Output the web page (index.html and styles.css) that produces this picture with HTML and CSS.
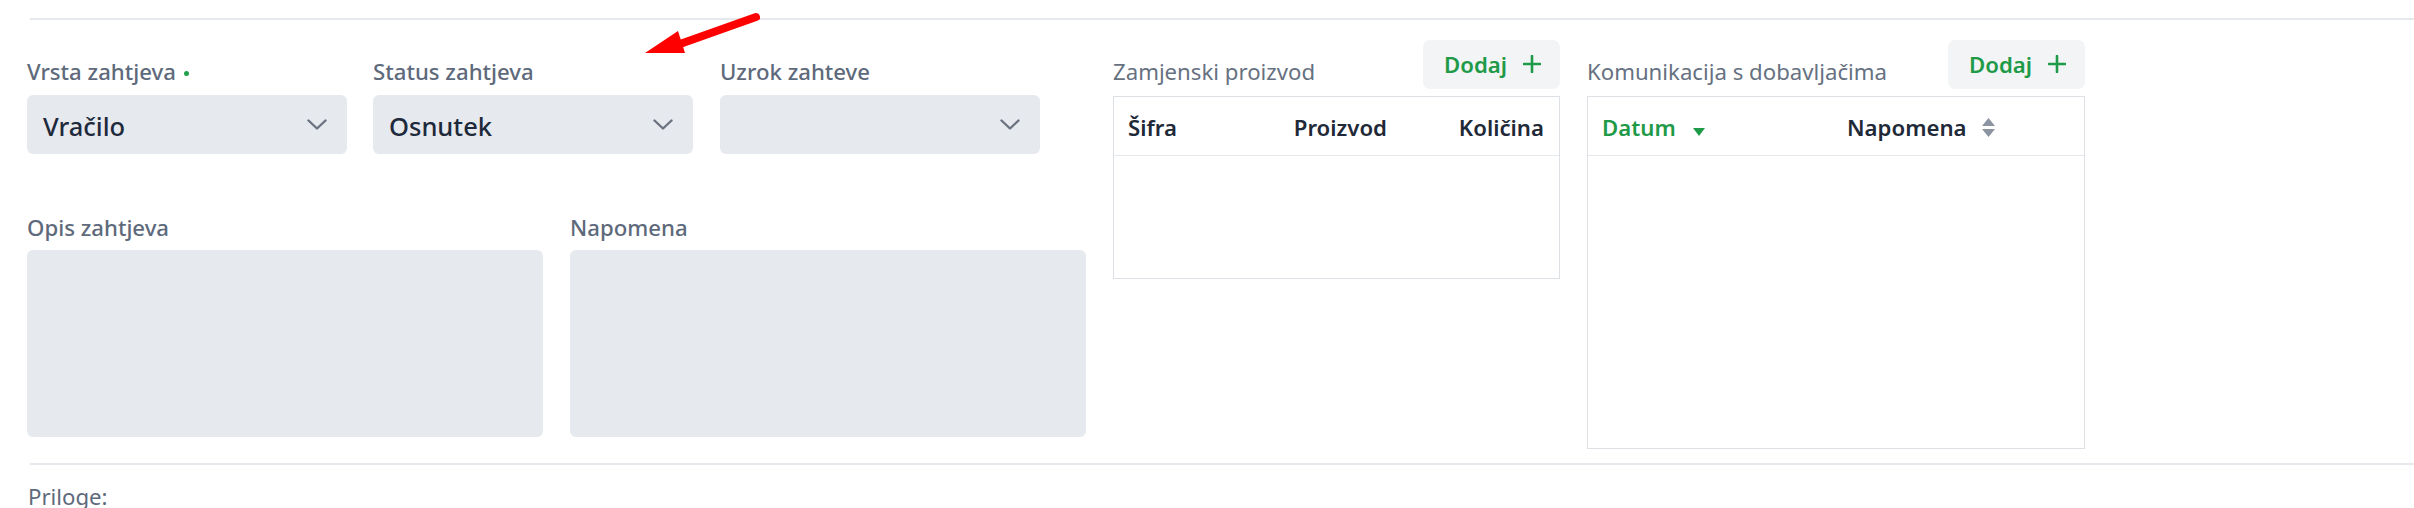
FILE: index.html
```html
<!DOCTYPE html>
<html lang="hr">
<head>
<meta charset="utf-8">
<title>Zahtjev</title>
<link rel="stylesheet" href="styles.css">
</head>
<body>
<div class="page">
  <div class="rule rule-top"></div>
  <div class="main">
    <div class="form">
      <div class="row row-3">
        <div class="field">
          <div class="label">Vrsta zahtjeva <span class="req"></span></div>
          <div class="select"><span class="value">Vračilo</span><svg class="chev" viewBox="0 0 20 11" width="20" height="11"><path d="M1.5 1.5 L10 9.5 L18.5 1.5" fill="none" stroke="#6b7280" stroke-width="2.4" stroke-linecap="round" stroke-linejoin="round"/></svg></div>
        </div>
        <div class="field">
          <div class="label">Status zahtjeva</div>
          <div class="select"><span class="value">Osnutek</span><svg class="chev" viewBox="0 0 20 11" width="20" height="11"><path d="M1.5 1.5 L10 9.5 L18.5 1.5" fill="none" stroke="#6b7280" stroke-width="2.4" stroke-linecap="round" stroke-linejoin="round"/></svg></div>
        </div>
        <div class="field">
          <div class="label">Uzrok zahteve</div>
          <div class="select"><span class="value"></span><svg class="chev" viewBox="0 0 20 11" width="20" height="11"><path d="M1.5 1.5 L10 9.5 L18.5 1.5" fill="none" stroke="#6b7280" stroke-width="2.4" stroke-linecap="round" stroke-linejoin="round"/></svg></div>
        </div>
      </div>
      <div class="row row-2">
        <div class="field field-wide">
          <div class="label">Opis zahtjeva</div>
          <div class="textarea"></div>
        </div>
        <div class="field field-wide">
          <div class="label">Napomena</div>
          <div class="textarea"></div>
        </div>
      </div>
    </div>

    <div class="panel panel-1">
      <div class="panel-head">
        <div class="panel-title">Zamjenski proizvod</div>
        <div class="btn">Dodaj <svg class="plus" viewBox="0 0 18 18" width="18" height="18"><path d="M9 1 V17 M1 9 H17" stroke="#1f9a48" stroke-width="2.6" stroke-linecap="round"/></svg></div>
      </div>
      <div class="table">
        <div class="thead thead-3">
          <div class="th">Šifra</div>
          <div class="th th-right">Proizvod</div>
          <div class="th th-right">Količina</div>
        </div>
        <div class="tbody tbody-short"></div>
      </div>
    </div>

    <div class="panel panel-2">
      <div class="panel-head">
        <div class="panel-title">Komunikacija s dobavljačima</div>
        <div class="btn">Dodaj <svg class="plus" viewBox="0 0 18 18" width="18" height="18"><path d="M9 1 V17 M1 9 H17" stroke="#1f9a48" stroke-width="2.6" stroke-linecap="round"/></svg></div>
      </div>
      <div class="table">
        <div class="thead thead-2">
          <div class="th th-active">Datum <svg class="caret" viewBox="0 0 12 8" width="12" height="8"><path d="M0 0 H12 L6 8 Z" fill="#1f9a48"/></svg></div>
          <div class="th">Napomena <svg class="sort" viewBox="0 0 13 19" width="13" height="19"><path d="M6.5 0 L13 8 H0 Z" fill="#8c94a2"/><path d="M0 11 H13 L6.5 19 Z" fill="#8c94a2"/></svg></div>
        </div>
        <div class="tbody tbody-tall"></div>
      </div>
    </div>
  </div>
  <div class="rule rule-bottom"></div>
  <div class="attachments">Priloge:</div>

  <svg class="annotation" viewBox="0 0 130 50" width="130" height="50">
    <path d="M116 7 L40 34" stroke="#ff0000" stroke-width="8" stroke-linecap="round"/>
    <polygon points="5,43 38,21 45,43" fill="#ff0000"/>
  </svg>
</div>
</body>
</html>
```

FILE: styles.css
```css
* { box-sizing: border-box; }

html, body {
  margin: 0;
  padding: 0;
  background: #ffffff;
}

body {
  font-family: "Noto Sans", "Open Sans", "DejaVu Sans", sans-serif;
  font-size: 22.2px;
  color: #1f2937;
  width: 2414px;
  height: 508px;
  overflow: hidden;
}

.page {
  position: relative;
  padding-top: 18px;
}

.rule {
  height: 2px;
  background: #e5e8ec;
  margin-left: 30px;
}

.main {
  display: flex;
  align-items: flex-start;
  margin-top: 20px;
  padding-left: 27px;
  gap: 26px;
}

/* ---------- form ---------- */
.form {
  width: 1060px;
  padding-top: 17px;
}

.row {
  display: flex;
}

.row-3 { gap: 26px; }
.row-3 .field:nth-child(2) { margin-left: 0; }
.row-3 .field:nth-child(3) { margin-left: 1px; }

.row-2 {
  gap: 27px;
  margin-top: 59px;
}

.field { width: 320px; }
.field-wide { width: 516px; }

.label {
  font-size: 22.2px;
  line-height: 30px;
  height: 30px;
  font-weight: 500;
  color: #5e6a7b;
  margin-bottom: 8px;
  white-space: nowrap;
  display: flex;
  align-items: center;
}

.row-2 .label { margin-bottom: 7px; }

.req {
  display: inline-block;
  width: 5px;
  height: 5px;
  border-radius: 50%;
  background: #22a04b;
  margin-left: 8px;
  margin-top: 2px;
}

.select {
  height: 59px;
  background: #e6e9ee;
  border-radius: 6px;
  display: flex;
  align-items: center;
  justify-content: space-between;
  padding: 0 20px 0 16px;
}

.value {
  font-size: 25.5px;
  font-weight: 500;
  color: #1e293b;
  padding-top: 2px;
}

.chev { display: block; }

.textarea {
  height: 187px;
  background: #e6e9ee;
  border-radius: 6px;
}

/* ---------- panels ---------- */
.panel-1 { width: 447px; }
.panel-2 { width: 498px; margin-left: 1px; }

.panel-head {
  display: flex;
  justify-content: space-between;
  align-items: flex-end;
  height: 49px;
}

.panel-title {
  font-size: 22.2px;
  line-height: 30px;
  color: #667181;
  margin-bottom: 2px;
  white-space: nowrap;
}

.btn {
  height: 49px;
  width: 137px;
  background: #f2f4f6;
  border-radius: 7px;
  display: flex;
  align-items: center;
  padding-left: 21px;
  gap: 16px;
  font-weight: 600;
  color: #1f9a48;
  font-size: 22.2px;
}

.plus { display: block; margin-top: -1px; }

.table {
  margin-top: 7px;
  border: 1px solid #dde1e6;
}

.thead {
  height: 59px;
  border-bottom: 1px solid #e5e8ec;
  display: grid;
  align-items: center;
  padding-top: 2px;
}

.thead-3 { grid-template-columns: 1fr 140px 157px; }
.thead-2 { grid-template-columns: 245px 1fr; }

.th {
  font-weight: 600;
  color: #1f2937;
  padding: 0 15px 0 14px;
  display: flex;
  align-items: center;
  white-space: nowrap;
}

.th-right { justify-content: flex-end; }

.th-active { color: #1f9a48; }

.caret { display: block; margin-left: 17px; margin-top: 10px; }
.sort { display: block; margin-left: 15px; }

.tbody-short { height: 122px; }
.tbody-tall { height: 292px; }

/* ---------- bottom ---------- */
.rule-bottom { margin-top: 14px; }

.attachments {
  margin-top: 17px;
  margin-left: 28px;
  line-height: 30px;
  color: #5e6a7b;
  font-size: 22.2px;
}

.annotation {
  position: absolute;
  left: 640px;
  top: 10px;
  pointer-events: none;
}
```
